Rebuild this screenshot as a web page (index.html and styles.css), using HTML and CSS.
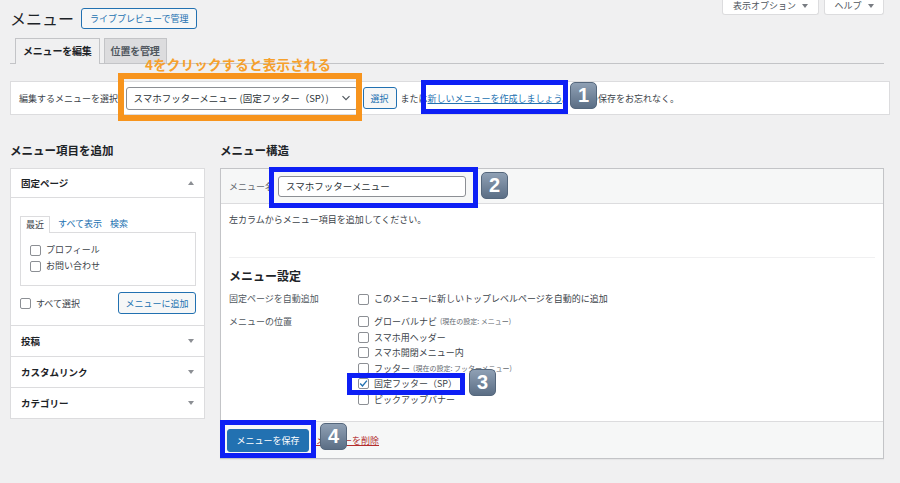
FILE: index.html
```html
<!DOCTYPE html>
<html lang="ja">
<head>
  <meta charset="UTF-8">
  <title>メニュー</title>
  <link rel="stylesheet" href="styles.css">
</head>
<body>

  <header class="page-head">
    <h1 class="page-title">メニュー</h1>
    <a class="title-action">ライブプレビューで管理</a>
    <div class="screen-meta">
      <button class="meta-btn meta-options">表示オプション<span class="caret"></span></button>
      <button class="meta-btn meta-help">ヘルプ<span class="caret"></span></button>
    </div>
  </header>

  <nav class="tab-bar">
    <a class="tab is-active">メニューを編集</a>
    <a class="tab">位置を管理</a>
  </nav>

  <div class="manage-menus">
    <span class="manage-label">編集するメニューを選択:</span>
    <div class="select-box">
      <span>スマホフッターメニュー (固定フッター（SP）)</span>
      <svg width="10" height="10" viewBox="0 0 10 10"><path d="M1.5 3.2 5 6.7 8.5 3.2" fill="none" stroke="#50575e" stroke-width="1.2"/></svg>
    </div>
    <button class="btn-secondary btn-select">選択</button>
    <span class="manage-text">または<a class="link">新しいメニューを作成しましょう</a>。変更の保存をお忘れなく。</span>
  </div>

  <div class="columns">
    <div class="side-col">
      <h2 class="col-title">メニュー項目を追加</h2>
      <div class="accordion">
        <section class="acc-section">
          <h3 class="acc-head">固定ページ<span class="arrow is-up"></span></h3>
          <div class="acc-body">
            <ul class="mini-tabs">
              <li class="is-active">最近</li>
              <li>すべて表示</li>
              <li>検索</li>
            </ul>
            <div class="check-panel">
              <label class="check"><span class="box"></span>プロフィール</label>
              <label class="check"><span class="box"></span>お問い合わせ</label>
            </div>
            <div class="acc-actions">
              <label class="check"><span class="box"></span>すべて選択</label>
              <button class="btn-secondary btn-add">メニューに追加</button>
            </div>
          </div>
        </section>
        <section class="acc-section"><h3 class="acc-head">投稿<span class="arrow"></span></h3></section>
        <section class="acc-section"><h3 class="acc-head">カスタムリンク<span class="arrow"></span></h3></section>
        <section class="acc-section"><h3 class="acc-head">カテゴリー<span class="arrow"></span></h3></section>
      </div>
    </div>

    <div class="main-col">
      <h2 class="col-title">メニュー構造</h2>
      <div class="menu-edit">
        <div class="edit-head">
          <label class="name-label">メニュー名</label>
          <div class="name-input">スマホフッターメニュー</div>
        </div>
        <div class="edit-body">
          <p class="drag-hint">左カラムからメニュー項目を追加してください。</p>
          <div class="settings">
            <h3 class="settings-title">メニュー設定</h3>
            <div class="setting-row">
              <div class="setting-label">固定ページを自動追加</div>
              <div class="setting-field">
                <label class="check"><span class="box"></span>このメニューに新しいトップレベルページを自動的に追加</label>
              </div>
            </div>
            <div class="setting-row">
              <div class="setting-label">メニューの位置</div>
              <div class="setting-field locations">
                <label class="check"><span class="box"></span>グローバルナビ<small>(現在の設定: メニュー)</small></label>
                <label class="check"><span class="box"></span>スマホ用ヘッダー</label>
                <label class="check"><span class="box"></span>スマホ開閉メニュー内</label>
                <label class="check"><span class="box"></span>フッター<small>(現在の設定: フッターメニュー)</small></label>
                <label class="check"><span class="box is-checked"><svg width="9" height="9" viewBox="0 0 9 9"><path d="M1.2 4.6 3.5 7 7.9 1.6" fill="none" stroke="#2271b1" stroke-width="1.4"/></svg></span>固定フッター（SP）</label>
                <label class="check"><span class="box"></span>ピックアップバナー</label>
              </div>
            </div>
          </div>
        </div>
        <div class="edit-foot">
          <button class="btn-primary">メニューを保存</button>
          <a class="delete-link">メニューを削除</a>
        </div>
      </div>
    </div>
  </div>

  <!-- tutorial markings drawn over the screen -->
  <div class="note-text">4をクリックすると表示される</div>
  <div class="mark mark-select"></div>
  <div class="mark mark-create"></div>
  <div class="mark mark-name"></div>
  <div class="mark mark-location"></div>
  <div class="mark mark-save"></div>
  <div class="badge badge-1">1</div>
  <div class="badge badge-2">2</div>
  <div class="badge badge-3">3</div>
  <div class="badge badge-4">4</div>

</body>
</html>
```

FILE: styles.css
```css
* {
  box-sizing: border-box;
}

body {
  margin: 0;
  background: #f0f0f1;
  font-family: "Noto Sans CJK JP", "Noto Sans", sans-serif;
  font-size: 9px;
  color: #3c434a;
  overflow: hidden;
  position: relative;
  height: 483px;
}

button {
  font-family: inherit;
  margin: 0;
}

/* header */

.page-head {
  display: flex;
  align-items: flex-start;
  height: 38px;
  padding: 0 16px 0 10px;
}

.page-title {
  margin: 8px 0 0;
  font-size: 16px;
  font-weight: 400;
  line-height: 20px;
  color: #1d2327;
}

.title-action {
  margin: 8px 0 0 7px;
  height: 21px;
  padding: 0 8px;
  border: 1px solid #2271b1;
  border-radius: 3px;
  background: #f6f7f7;
  color: #2271b1;
  line-height: 19px;
}

.screen-meta {
  margin-left: auto;
  display: flex;
  gap: 5px;
}

.meta-btn {
  display: flex;
  align-items: center;
  justify-content: center;
  gap: 6px;
  height: 15px;
  padding: 0 0 3px;
  border: 1px solid #dcdcde;
  border-top: 0;
  border-radius: 0 0 3px 3px;
  background: #fff;
  color: #50575e;
  font-size: 9px;
}

.meta-options {
  width: 97px;
}

.meta-help {
  width: 60px;
}

.caret {
  width: 0;
  height: 0;
  border-left: 3px solid transparent;
  border-right: 3px solid transparent;
  border-top: 4px solid #787c82;
}

/* tabs */

.tab-bar {
  display: flex;
  gap: 4px;
  height: 26px;
  margin: 0 16px 0 10px;
  padding-left: 5px;
  border-bottom: 1px solid #c3c4c7;
}

.tab {
  height: 25px;
  padding: 0 6px;
  border: 1px solid #c3c4c7;
  border-bottom: 0;
  background: #dcdcde;
  color: #50575e;
  font-size: 10px;
  font-weight: 700;
  line-height: 24px;
  letter-spacing: -0.2px;
}

.tab.is-active {
  height: 26px;
  padding: 0 7px;
  background: #f0f0f1;
  color: #1d2327;
}

/* manage bar */

.manage-menus {
  display: flex;
  align-items: center;
  height: 34px;
  margin: 17px 10px 0 10px;
  padding: 0 8px;
  border: 1px solid #dcdcde;
  background: #fff;
}

.manage-label {
  color: #3c434a;
  margin-right: 5px;
}

.select-box {
  display: flex;
  align-items: center;
  justify-content: space-between;
  width: 232px;
  height: 23px;
  padding: 0 6px 0 7px;
  border: 1px solid #8c8f94;
  border-radius: 3px;
  background: #fff;
  color: #2c3338;
  font-size: 9.5px;
}

.btn-secondary {
  height: 22px;
  padding: 0 7px;
  border: 1px solid #2271b1;
  border-radius: 3px;
  background: #f6f7f7;
  color: #2271b1;
  font-size: 9px;
}

.btn-select {
  margin: 0 4px 0 5px;
}

.manage-text {
  color: #3c434a;
}

.link {
  color: #2271b1;
  text-decoration: underline;
}

/* columns */

.columns {
  display: flex;
  gap: 15px;
  margin: 27px 16px 0 10px;
}

.side-col {
  width: 195px;
}

.main-col {
  flex: 1;
}

.col-title {
  margin: 0 0 10px;
  font-size: 11.5px;
  font-weight: 700;
  line-height: 16px;
  color: #1d2327;
}

.accordion {
  border: 1px solid #dcdcde;
  background: #fff;
}

.acc-section + .acc-section {
  border-top: 1px solid #dcdcde;
}

.acc-head {
  display: flex;
  align-items: center;
  justify-content: space-between;
  height: 29px;
  margin: 0;
  padding: 0 10px;
  font-size: 9.5px;
  font-weight: 700;
  color: #1d2327;
}

.acc-section:first-child .acc-head {
  border-bottom: 1px solid #dcdcde;
  height: 29px;
}

.acc-section + .acc-section .acc-head {
  height: 30px;
}

.arrow {
  width: 0;
  height: 0;
  border-left: 3px solid transparent;
  border-right: 3px solid transparent;
  border-top: 4px solid #8c8f94;
}

.arrow.is-up {
  border-top: 0;
  border-bottom: 4px solid #8c8f94;
}

.acc-body {
  padding: 18px 8px 11px 9px;
}

.mini-tabs {
  display: flex;
  gap: 8px;
  margin: 0;
  padding: 0;
  list-style: none;
  line-height: 15px;
}

.mini-tabs li {
  color: #2271b1;
  padding: 0 0 1px;
}

.mini-tabs li.is-active {
  padding: 0 5px;
  border: 1px solid #dcdcde;
  border-bottom: 0;
  background: #fff;
  color: #3c434a;
  margin-bottom: -1px;
  position: relative;
}

.check-panel {
  display: flex;
  flex-direction: column;
  padding: 9px 9px 11px;
  border: 1px solid #dcdcde;
  line-height: 16px;
}

.check {
  display: flex;
  align-items: center;
  color: #3c434a;
}

.box {
  display: flex;
  align-items: center;
  justify-content: center;
  width: 11px;
  height: 11px;
  margin-right: 5px;
  border: 1px solid #8c8f94;
  border-radius: 2px;
  background: #fff;
  flex: none;
}

.acc-actions {
  display: flex;
  align-items: center;
  justify-content: space-between;
  margin-top: 6px;
}

.btn-add {
  width: 78px;
  padding: 0;
}

/* menu structure */

.menu-edit {
  border: 1px solid #c3c4c7;
  background: #fff;
  box-shadow: 0 1px 1px rgba(0, 0, 0, 0.04);
}

.edit-head {
  display: flex;
  align-items: center;
  gap: 4px;
  height: 35px;
  padding: 0 8px;
  border-bottom: 1px solid #dcdcde;
  background: #f6f7f7;
}

.name-label {
  color: #646970;
}

.name-input {
  width: 188px;
  height: 21px;
  padding: 0 7px;
  border: 1px solid #8c8f94;
  border-radius: 3px;
  background: #fff;
  color: #2c3338;
  font-size: 9.5px;
  line-height: 19px;
}

.edit-body {
  padding: 8px 8px 14px;
}

.drag-hint {
  margin: 0 0 29px;
  line-height: 16px;
}

.settings {
  border-top: 1px solid #f0f0f1;
  padding-top: 10px;
}

.settings-title {
  margin: 0 0 7px;
  font-size: 12px;
  font-weight: 700;
  line-height: 16px;
  color: #1d2327;
}

.setting-row {
  display: flex;
  line-height: 16px;
}

.setting-row + .setting-row {
  margin-top: 7px;
}

.setting-label {
  width: 129px;
  color: #50575e;
}

.locations {
  display: flex;
  flex-direction: column;
  line-height: 15.5px;
}

.locations small {
  margin-left: 3px;
  font-size: 7px;
  color: #646970;
}

.edit-foot {
  display: flex;
  align-items: center;
  gap: 7px;
  height: 37px;
  padding: 0 6px;
  border-top: 1px solid #dcdcde;
  background: #f6f7f7;
}

.btn-primary {
  width: 82px;
  height: 23px;
  border: 1px solid #2271b1;
  border-radius: 3px;
  background: #2271b1;
  color: #fff;
  font-size: 9px;
}

.delete-link {
  color: #b32d2e;
  text-decoration: underline;
}

/* tutorial markings */

.note-text {
  position: absolute;
  left: 145px;
  top: 55px;
  font-size: 13.5px;
  font-weight: 700;
  line-height: 18px;
  color: #f6a02c;
  letter-spacing: 0.2px;
}

.mark {
  position: absolute;
  border: 5px solid #0d1ff5;
}

.mark-select {
  left: 118px;
  top: 73px;
  width: 244px;
  height: 48px;
  border: 6px solid #f7941d;
}

.mark-create {
  left: 421px;
  top: 80px;
  width: 147px;
  height: 34px;
}

.mark-name {
  left: 269px;
  top: 167px;
  width: 209px;
  height: 41px;
}

.mark-location {
  left: 347px;
  top: 373px;
  width: 118px;
  height: 22px;
}

.mark-save {
  left: 220px;
  top: 420px;
  width: 96px;
  height: 38px;
}

.badge {
  position: absolute;
  width: 27px;
  height: 27px;
  border: 1px solid #55677c;
  border-radius: 5px;
  background: linear-gradient(#8fa0b4, #5b6e85);
  color: #fff;
  font-family: "Liberation Sans", sans-serif;
  font-size: 20px;
  font-weight: 700;
  line-height: 25px;
  text-align: center;
}

.badge-1 {
  left: 570px;
  top: 82px;
}

.badge-2 {
  left: 481px;
  top: 172px;
}

.badge-3 {
  left: 469px;
  top: 369px;
}

.badge-4 {
  left: 320px;
  top: 423px;
}
```
